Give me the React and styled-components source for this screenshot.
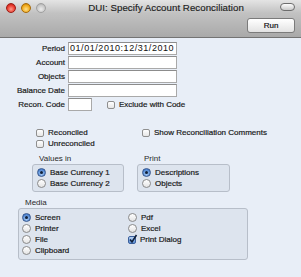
import React from 'react'
import styled, { createGlobalStyle } from 'styled-components'

const Global = createGlobalStyle`
  html, body { margin: 0; padding: 0; background: #e8eef7; }
  body { font-family: "Liberation Sans", Arial, sans-serif; }
`

const Window = styled.div`
  width: 301px;
  height: 277px;
  display: flex;
  flex-direction: column;
  overflow: hidden;
  background: #e8eef7;
`

const TitleBar = styled.div`
  height: 37px;
  border-bottom: 1px solid #737373;
  background: linear-gradient(#e4e4e4, #c2c2c2 35%, #a9a9a9 100%);
  display: flex;
  flex-direction: column;
`

const TopRow = styled.div`
  height: 15px;
  display: flex;
  align-items: center;
  padding: 0 6px 0 6px;
  gap: 5px;
`

const Light = styled.span`
  width: 10px;
  height: 10px;
  border-radius: 50%;
  flex: none;
  box-sizing: border-box;
  border: 1px solid ${p => p.$edge};
  background: radial-gradient(circle at 50% 65%, ${p => p.$hi} 0%, ${p => p.$c} 60%, ${p => p.$edge} 100%);
`

const Title = styled.div`
  flex: 1;
  text-align: center;
  font-size: 9.7px;
  color: #1c1c1c;
  margin-left: 6px;
  letter-spacing: 0.05px;
  -webkit-text-stroke: 0.15px #1c1c1c;
`

const Pill = styled.span`
  width: 13px;
  height: 6px;
  border: 1px solid #6d6d6d;
  border-radius: 4px;
  background: linear-gradient(#fdfdfd, #c9c9c9);
  margin-top: -1px;
`

const ToolRow = styled.div`
  display: flex;
  justify-content: flex-end;
  padding: 3px 6px 0 0;
`

const RunButton = styled.button`
  width: 48px;
  height: 15px;
  padding: 0;
  border: 1px solid #7b7b7b;
  border-radius: 3px;
  background: linear-gradient(#ffffff, #f1f1f1 50%, #e2e2e2);
  font-family: "Liberation Sans", Arial, sans-serif;
  font-size: 8px;
  color: #111;
  -webkit-text-stroke: 0.2px #111;
`

const Content = styled.div`
  flex: 1;
  display: flex;
  flex-direction: column;
  font-size: 8px;
  color: #1a1a1a;
`

const FieldGrid = styled.div`
  display: grid;
  grid-template-columns: 65px auto;
  column-gap: 3px;
  row-gap: 1px;
  margin-top: 4px;
`

const Label = styled.div`
  text-align: right;
  line-height: 13px;
  white-space: nowrap;
  -webkit-text-stroke: 0.2px #1a1a1a;
`

const Field = styled.div`
  box-sizing: border-box;
  width: ${p => p.$w}px;
  height: 13px;
  background: #fff;
  border: 1px solid #a9a9a9;
  border-top-color: #8c8c8c;
  padding: 0 1px;
  line-height: 11px;
  font-size: 9px;
  letter-spacing: 0.55px;
  color: #111;
  white-space: nowrap;
  overflow: hidden;
`

const Inline = styled.div`
  display: flex;
  align-items: center;
  gap: ${p => p.$gap || 0}px;
`

const Option = styled.div`
  display: flex;
  align-items: center;
  height: 11px;
  gap: 4px;
  white-space: nowrap;
  -webkit-text-stroke: 0.2px #1a1a1a;
`

const Box = styled.span`
  width: 8px;
  height: 8px;
  flex: none;
  box-sizing: border-box;
  border: 1px solid #8f8f8f;
  border-radius: 2px;
  background: linear-gradient(#ffffff, #e6e6e6);
  position: relative;
  ${p => p.$on && `
    border-color: #3a5f9c;
    background: linear-gradient(#b7d2f4, #5b8fd6);
  `}
`

const Tick = styled.svg`
  position: absolute;
  left: -1px;
  top: -3px;
`

const Round = styled.span`
  width: 9px;
  height: 9px;
  flex: none;
  box-sizing: border-box;
  border-radius: 50%;
  border: 1px solid #8a8a8a;
  background: linear-gradient(#ffffff, #e4e4e4);
  display: flex;
  align-items: center;
  justify-content: center;
  ${p => p.$on && `
    border-color: #35568d;
    background: radial-gradient(circle at 50% 70%, #a9cdf6, #4d84d1 70%);
  `}
  &::after {
    content: "";
    width: 3px;
    height: 3px;
    border-radius: 50%;
    background: ${p => (p.$on ? '#10203a' : 'transparent')};
  }
`

const CheckGrid = styled.div`
  display: grid;
  grid-template-columns: 106px auto;
  padding-left: 36px;
  margin-top: 16px;
`

const GroupRow = styled.div`
  display: flex;
  gap: 13px;
  padding-left: ${p => p.$left}px;
  margin-top: ${p => p.$top}px;
`

const Group = styled.div`
  display: flex;
  flex-direction: column;
`

const Legend = styled.div`
  line-height: 10px;
  padding-left: 7px;
  color: #2a2a2a;
`

const Frame = styled.div`
  box-sizing: border-box;
  width: ${p => p.$w}px;
  border: 1px solid #b7bec9;
  border-radius: 3px;
  background: #dde4ee;
  padding: ${p => p.$pad || '2px 4px'};
`

const MediaGrid = styled.div`
  display: grid;
  grid-template-columns: 106px auto;
  grid-template-rows: repeat(4, 11px);
  grid-auto-flow: column;
`

const Check = ({ on, children }) => (
  <Option>
    <Box $on={on}>
      {on && (
        <Tick width="10" height="10" viewBox="0 0 10 10">
          <path d="M2 5.5 L4 8 L8.5 1" fill="none" stroke="#10203a" strokeWidth="1.6" />
        </Tick>
      )}
    </Box>
    {children}
  </Option>
)

const Radio = ({ on, children }) => (
  <Option>
    <Round $on={on} />
    {children}
  </Option>
)

export default function App() {
  return (
    <Window>
      <Global />
      <TitleBar>
        <TopRow>
          <Light $c="#e8382c" $hi="#ff9c8c" $edge="#9c1c14" />
          <Light $c="#f0a818" $hi="#ffe08a" $edge="#a86a08" />
          <Light $c="#c8c8c8" $hi="#ececec" $edge="#a0a0a0" />
          <Title>DUI: Specify Account Reconciliation</Title>
          <Pill />
        </TopRow>
        <ToolRow>
          <RunButton>Run</RunButton>
        </ToolRow>
      </TitleBar>
      <Content>
        <FieldGrid>
          <Label>Period</Label>
          <Field $w={109}>01/01/2010:12/31/2010</Field>
          <Label>Account</Label>
          <Field $w={109} />
          <Label>Objects</Label>
          <Field $w={109} />
          <Label>Balance Date</Label>
          <Field $w={109} />
          <Label>Recon. Code</Label>
          <Inline $gap={15}>
            <Field $w={24} />
            <Check>Exclude with Code</Check>
          </Inline>
        </FieldGrid>

        <CheckGrid>
          <Check>Reconciled</Check>
          <Check>Show Reconciliation Comments</Check>
          <Check>Unreconciled</Check>
        </CheckGrid>

        <GroupRow $left={32} $top={5}>
          <Group>
            <Legend>Values in</Legend>
            <Frame $w={92}>
              <Radio on>Base Currency 1</Radio>
              <Radio>Base Currency 2</Radio>
            </Frame>
          </Group>
          <Group>
            <Legend>Print</Legend>
            <Frame $w={93}>
              <Radio on>Descriptions</Radio>
              <Radio>Objects</Radio>
            </Frame>
          </Group>
        </GroupRow>

        <GroupRow $left={18} $top={6}>
          <Group>
            <Legend>Media</Legend>
            <Frame $w={230} $pad="3px 3px">
              <MediaGrid>
                <Radio on>Screen</Radio>
                <Radio>Printer</Radio>
                <Radio>File</Radio>
                <Radio>Clipboard</Radio>
                <Radio>Pdf</Radio>
                <Radio>Excel</Radio>
                <Check on>Print Dialog</Check>
              </MediaGrid>
            </Frame>
          </Group>
        </GroupRow>
      </Content>
    </Window>
  )
}
